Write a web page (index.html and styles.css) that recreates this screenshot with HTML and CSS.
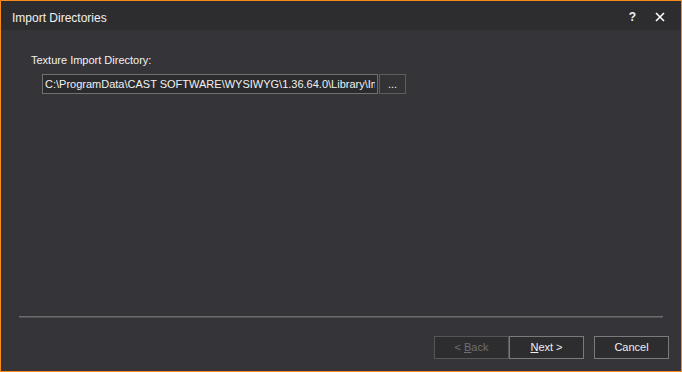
FILE: index.html
```html
<!DOCTYPE html>
<html lang="en">
<head>
  <meta charset="UTF-8">
  <title>Import Directories</title>
  <link rel="stylesheet" href="styles.css">
</head>
<body>
  <div class="window">
    <div class="titlebar">
      <span class="title">Import Directories</span>
      <span class="title-btn help">?</span>
      <span class="title-btn close">
        <svg viewBox="0 0 10 10" width="10" height="10">
          <path d="M1 1L9 9M9 1L1 9" stroke="#ffffff" stroke-width="1.6"></path>
        </svg>
      </span>
    </div>

    <div class="content">
      <div class="field-label">Texture Import Directory:</div>
      <div class="path-row">
        <div class="path-input"><span class="path-text">C:\ProgramData\CAST SOFTWARE\WYSIWYG\1.36.64.0\Library\Im</span></div>
        <div class="browse">...</div>
      </div>
    </div>

    <div class="footer">
      <div class="separator"></div>
      <div class="buttons">
        <div class="btn disabled">&lt; <u>B</u>ack</div>
        <div class="btn next"><u>N</u>ext &gt;</div>
        <div class="btn cancel">Cancel</div>
      </div>
    </div>
  </div>
</body>
</html>
```

FILE: styles.css
```css
:root {
  --accent: #fb8a1c;
  --title-bg: #2d2d30;
  --body-bg: #353539;
  --text: #f1f1f1;
  --muted: #6f6f6f;
  --border: #707070;
  --field-bg: #2b2b2e;
}

* {
  margin: 0;
  padding: 0;
  box-sizing: border-box;
}

body {
  width: 682px;
  height: 372px;
  font-family: "Liberation Sans", Arial, sans-serif;
  font-size: 11px;
  color: var(--text);
  background: var(--body-bg);
  overflow: hidden;
}

.window {
  width: 682px;
  height: 372px;
  border: 1px solid var(--accent);
  display: flex;
  flex-direction: column;
  background: var(--body-bg);
}

.titlebar {
  height: 29px;
  background: var(--title-bg);
  display: flex;
  align-items: center;
  padding-left: 11px;
  padding-right: 16px;
}

.title {
  flex: 1;
  font-size: 12px;
  padding-top: 4px;
}

.title-btn {
  font-size: 12px;
  font-weight: bold;
  display: flex;
  align-items: center;
  padding-top: 3px;
}

.help {
  margin-right: 19px;
}

/* Поле каталогу */
.content {
  flex: 1;
  padding: 24px 0 0 30px;
}

.field-label {
  margin-bottom: 8px;
  line-height: 12px;
}

.path-row {
  display: flex;
  padding-left: 11px;
  height: 20px;
}

.path-input {
  width: 336px;
  height: 20px;
  border: 1px solid var(--border);
  background: var(--field-bg);
  padding: 3px 2px 0 2px;
  white-space: nowrap;
  overflow: hidden;
}

.path-text {
  display: block;
  width: 330px;
  overflow: hidden;
}

.browse {
  width: 27px;
  height: 20px;
  margin-left: 1px;
  border: 1px solid #5e5e5e;
  background: #333336;
  text-align: center;
  padding-top: 3px;
}

/* Кнопки майстра */
.footer {
  padding: 0 12px 12px 18px;
}

.separator {
  height: 2px;
  background: #6c6c6c;
  border-bottom: 1px solid #505053;
  margin-right: 6px;
  margin-bottom: 18px;
}

.buttons {
  display: flex;
  justify-content: flex-end;
}

.btn {
  width: 75px;
  height: 23px;
  border: 1px solid #7a7a7a;
  background: #2d2d30;
  text-align: center;
  line-height: 21px;
}

.btn.disabled {
  color: var(--muted);
  border-color: #555558;
}

.btn.cancel {
  margin-left: 10px;
}
```
